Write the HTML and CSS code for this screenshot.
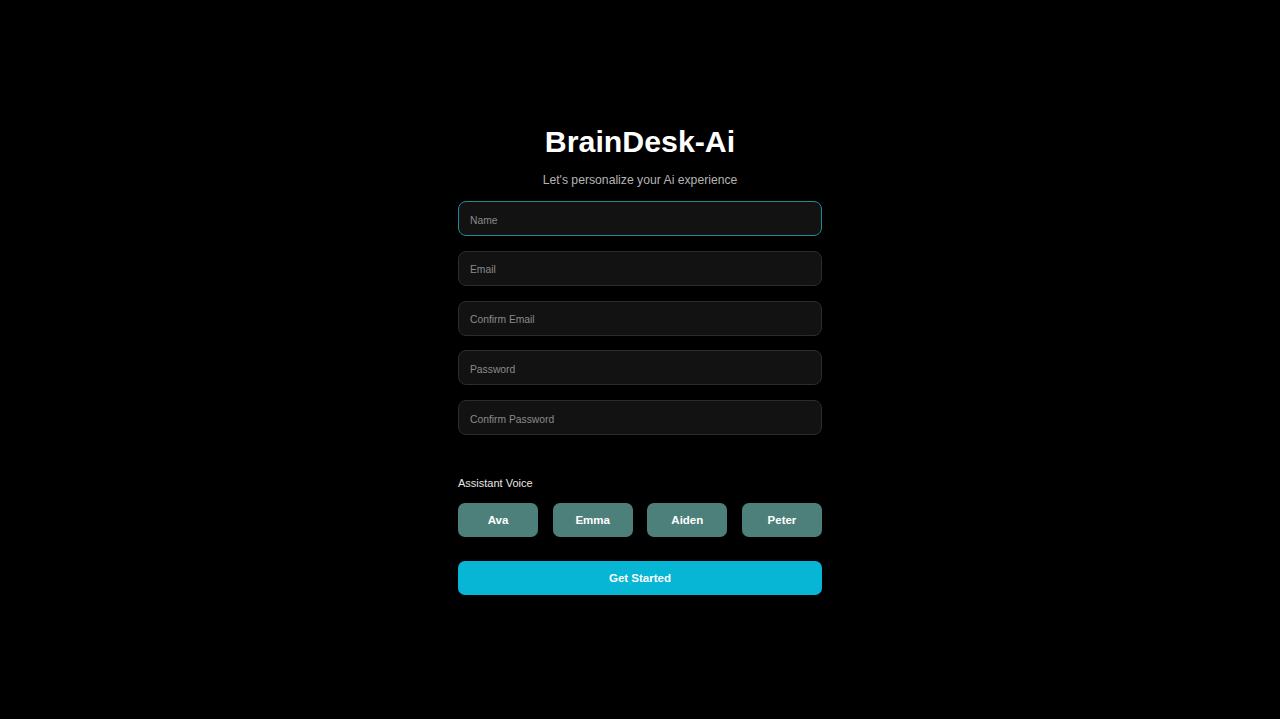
FILE: index.html
```html
<!DOCTYPE html>
<html lang="en">
<head>
<meta charset="utf-8">
<title>BrainDesk-Ai</title>
<link rel="stylesheet" href="styles.css">
</head>
<body>
<main class="page">
  <form class="card" onsubmit="return false">
    <h1 class="title">BrainDesk-Ai</h1>
    <p class="subtitle">Let's personalize your Ai experience</p>
    <div class="fields">
      <input class="field field-focus" type="text" placeholder="Name">
      <input class="field" type="email" placeholder="Email">
      <input class="field" type="email" placeholder="Confirm Email">
      <input class="field" type="password" placeholder="Password">
      <input class="field" type="password" placeholder="Confirm Password">
    </div>
    <div class="voice-label">Assistant Voice</div>
    <div class="voices">
      <button type="button" class="voice">Ava</button>
      <button type="button" class="voice">Emma</button>
      <button type="button" class="voice">Aiden</button>
      <button type="button" class="voice">Peter</button>
    </div>
    <button type="submit" class="start">Get Started</button>
  </form>
</main>
</body>
</html>
```
FILE: styles.css
```css
html, body {
  margin: 0;
  padding: 0;
  background: #000;
  height: 100%;
}
body {
  font-family: "Liberation Sans", Arial, sans-serif;
  color: #fff;
}
.page {
  display: flex;
  justify-content: center;
  padding-top: 124px;
}
.card {
  width: 364px;
  display: flex;
  flex-direction: column;
}
.title {
  margin: 0;
  font-size: 30.3px;
  line-height: 36px;
  font-weight: 700;
  text-align: center;
  color: #fff;
}
.subtitle {
  margin: 12px 0 0;
  font-size: 12.2px;
  line-height: 16px;
  text-align: center;
  color: #b4b4b4;
}
.fields {
  margin-top: 13px;
  display: flex;
  flex-direction: column;
  gap: 14.75px;
}
.field {
  box-sizing: border-box;
  height: 35px;
  width: 100%;
  margin: 0;
  padding: 3px 11px 0;
  background: #121212;
  border: 1px solid #2c2c2c;
  border-radius: 8px;
  color: #ddd;
  font-family: "Liberation Sans", Arial, sans-serif;
  font-size: 10.3px;
  outline: none;
}
.field::placeholder {
  color: #8a8a8a;
}
.field-focus {
  border-color: #1d8a94;
}
.voice-label {
  margin-top: 41px;
  font-size: 11px;
  line-height: 14px;
  color: #e6e6e6;
}
.voices {
  margin-top: 13px;
  display: flex;
  justify-content: space-between;
}
.voice {
  box-sizing: border-box;
  width: 80px;
  height: 34px;
  border: none;
  border-radius: 7px;
  background: #4e807b;
  color: #fff;
  font-family: "Liberation Sans", Arial, sans-serif;
  font-weight: 700;
  font-size: 11.5px;
  padding: 0;
}
.start {
  box-sizing: border-box;
  margin-top: 24px;
  height: 34px;
  width: 100%;
  border: none;
  border-radius: 7px;
  background: #07b5d5;
  color: #fff;
  font-family: "Liberation Sans", Arial, sans-serif;
  font-weight: 700;
  font-size: 11.5px;
  padding: 0;
}
```
